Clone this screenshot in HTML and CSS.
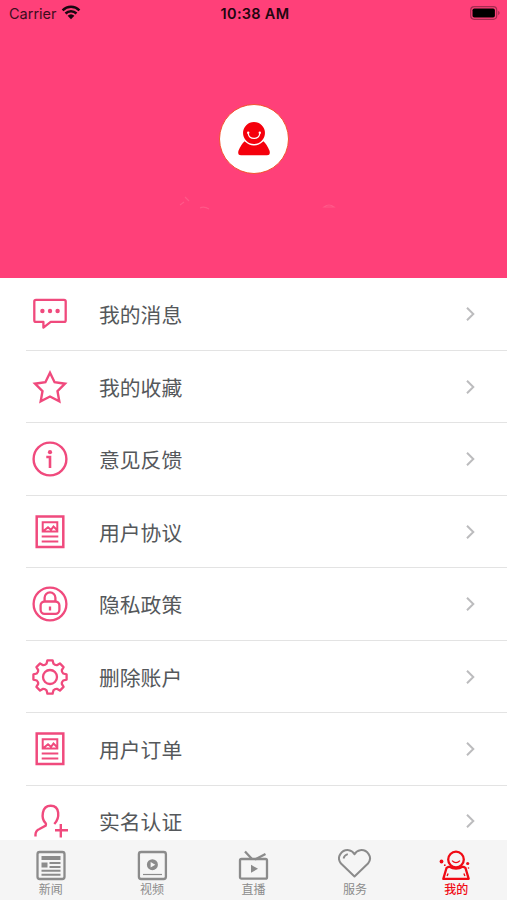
FILE: index.html
```html
<!DOCTYPE html>
<html lang="zh-CN">
<head>
  <meta charset="UTF-8">
  <meta name="viewport" content="width=device-width, initial-scale=1.0">
  <title>我的</title>
  <link rel="stylesheet" href="styles.css">
</head>
<body>
  <svg class="defs" width="0" height="0">
    <symbol id="doc" viewBox="-18 -18 36 36">
      <path d="M-13.300-15.500h26.600v30.500h-26.600z" fill="none" stroke="currentColor" stroke-width="2.500"/>
      <path d="M-7.300-9.800H7.300V-.5H-7.300zM-6-1.500l4-3.300 3 2.600 2.500-3.200L7-2" fill="none" stroke="currentColor" stroke-width="2"/>
      <path d="M-8.300 4.600H8.300M-8.300 9.600H8.300" stroke="currentColor" stroke-width="2"/>
    </symbol>
    <symbol id="chevron" viewBox="0 0 10 16">
      <path d="M2 1.800L8.300 8 2 14.200" fill="none" stroke="currentColor" stroke-width="2"/>
    </symbol>
  </svg>

  <div class="app">
    <header class="profile">
      <div class="status-bar">
        <div class="carrier">
          <span>Carrier</span>
          <svg width="20" height="15" viewBox="0 0 20 15">
            <path d="M1.600 5.300a12 12 0 0 1 16.800 0M4.500 8.500a8 8 0 0 1 11 0" fill="none" stroke="#180710" stroke-width="2.500"/>
            <path d="M6.600 10.800a5 5 0 0 1 6.800 0L10 14.200z" fill="#180710"/>
          </svg>
        </div>
        <span class="time">10:38 AM</span>
        <svg class="battery" width="31" height="14" viewBox="0 0 31 14">
          <rect x=".7" y=".7" width="26" height="12.600" rx="3.500" fill="none" stroke="#a52b50" stroke-width="1.200"/>
          <rect x="2.500" y="2.500" width="22.400" height="9" rx="1.800" fill="#000"/>
          <path d="M28.200 4.800q3 2.200 0 4.400z" fill="#a52b50"/>
        </svg>
      </div>
      <div class="avatar">
        <svg width="34" height="36" viewBox="0 0 34 36">
          <path d="M7.600 20.200h18.800q3.500 3 6.100 9.600 1.200 4.400-2.500 4.400H4q-3.700 0-2.500-4.400 2.600-6.600 6.100-9.600z" fill="#f5000c"/>
          <circle cx="17" cy="12" r="11.700" fill="#f5000c" stroke="#fff" stroke-width="1.500"/>
          <path d="M11.200 12.600a5.900 5.900 0 0 0 11.600 0" fill="none" stroke="#fff" stroke-width="1.200"/>
          <circle cx="11.200" cy="11.800" r="1.200" fill="#fff"/>
          <circle cx="22.800" cy="11.800" r="1.200" fill="#fff"/>
        </svg>
      </div>
      <svg class="smudge" width="150" height="18" viewBox="0 0 150 18">
        <path d="M6 3l4 4M1 11l4-3M21 14q4-2 9 1M145 13q5-4 10 0z" fill="none" stroke="#ff7098" stroke-width="1.200" opacity=".5"/>
      </svg>
    </header>

    <main class="menu">
      <a class="menu-item">
        <svg class="menu-icon" viewBox="-18 -18 36 36">
          <path d="M-14-14.200h28q1.700 0 1.700 1.700V6.200q0 1.700-1.700 1.700H.7l-7.300 5.700V7.900H-14q-1.700 0-1.700-1.700v-18.700q0-1.700 1.700-1.700z" fill="none" stroke="currentColor" stroke-width="2.300" stroke-linejoin="round"/>
          <g fill="currentColor"><circle cx="-7.600" cy="-3" r="2.200"/><circle cx="0" cy="-3" r="2.200"/><circle cx="7.600" cy="-3" r="2.200"/></g>
        </svg>
        <span class="menu-text">我的消息</span>
        <svg class="arrow"><use href="#chevron"/></svg>
      </a>
      <a class="menu-item">
        <svg class="menu-icon" viewBox="-18 -18 36 36">
          <path d="M0-14.300l4.600 9.500L15-3.300 7.500 4.100 9.300 14.300 0 9.500-9.300 14.300-7.500 4.100-15-3.300-4.600-4.800z" fill="none" stroke="currentColor" stroke-width="2.400"/>
        </svg>
        <span class="menu-text">我的收藏</span>
        <svg class="arrow"><use href="#chevron"/></svg>
      </a>
      <a class="menu-item">
        <svg class="menu-icon" viewBox="-18 -18 36 36">
          <circle r="16.400" fill="none" stroke="currentColor" stroke-width="2.400"/>
          <circle cy="-6.800" r="2.100" fill="currentColor"/>
          <path d="M-3.700-2H0V9" fill="none" stroke="currentColor" stroke-width="2.600"/>
        </svg>
        <span class="menu-text">意见反馈</span>
        <svg class="arrow"><use href="#chevron"/></svg>
      </a>
      <a class="menu-item">
        <svg class="menu-icon"><use href="#doc"/></svg>
        <span class="menu-text">用户协议</span>
        <svg class="arrow"><use href="#chevron"/></svg>
      </a>
      <a class="menu-item">
        <svg class="menu-icon" viewBox="-18 -18 36 36">
          <g fill="none" stroke="currentColor" stroke-width="2.300">
            <circle r="16.400"/>
            <rect x="-9.400" y="-2.500" width="18.800" height="12.300" rx="4"/>
            <path d="M-5.400-2.500v-3.700a5.400 5.400 0 0 1 10.800 0v3.700"/>
            <path d="M0 2.500v4"/>
          </g>
        </svg>
        <span class="menu-text">隐私政策</span>
        <svg class="arrow"><use href="#chevron"/></svg>
      </a>
      <a class="menu-item">
        <svg class="menu-icon" viewBox="-18 -18 36 36">
          <g fill="none" stroke="currentColor" stroke-width="2.300" stroke-linejoin="round">
            <path d="M-3.500-13.200L-2.600-16.600 2.600-16.600 3.500-13.200Q5-11.600 6.860-11.810L9.900-13.580 13.580-9.900 11.810-6.860Q11.600-5 13.200-3.500L16.600-2.600 16.600 2.600 13.200 3.500Q11.600 5 11.810 6.860L13.580 9.900 9.900 13.580 6.860 11.810Q5 11.600 3.500 13.200L2.600 16.600-2.600 16.600-3.500 13.200Q-5 11.600-6.860 11.810L-9.900 13.580-13.580 9.900-11.810 6.860Q-11.600 5-13.200 3.500L-16.600 2.600-16.600-2.600-13.200-3.500Q-11.600-5-11.810-6.860L-13.580-9.900-9.900-13.580-6.860-11.810Q-5-11.600-3.500-13.200z"/>
            <circle r="7"/>
          </g>
        </svg>
        <span class="menu-text">删除账户</span>
        <svg class="arrow"><use href="#chevron"/></svg>
      </a>
      <a class="menu-item">
        <svg class="menu-icon"><use href="#doc"/></svg>
        <span class="menu-text">用户订单</span>
        <svg class="arrow"><use href="#chevron"/></svg>
      </a>
      <a class="menu-item">
        <svg class="menu-icon" viewBox="-18 -18 36 36">
          <path d="M-14.500 15.500V13.500Q-14.300 9.500-10.500 8L-4.200 4.500Q-3.500 3.500-4.500 2C-9-2.500-8.700-15.300 .7-15.300S10-3 4.300 3M5 9.300H18M10.800 3v13.500" fill="none" stroke="currentColor" stroke-width="2.400"/>
        </svg>
        <span class="menu-text">实名认证</span>
        <svg class="arrow"><use href="#chevron"/></svg>
      </a>
    </main>

    <nav class="tab-bar">
      <a class="tab">
        <svg width="34" height="34" viewBox="0 0 34 34">
          <rect x="3.500" y="4" width="27" height="27" rx="2.200" fill="none" stroke="currentColor" stroke-width="2.300"/>
          <path d="M7.500 8h19v4h-19zM7.500 14.500h6v5h-6z" fill="currentColor"/>
          <path d="M15.500 15h11M15.500 19h11M7.500 22.800h19M7.500 26.800h19" stroke="currentColor" stroke-width="1.900"/>
        </svg>
        <span>新闻</span>
      </a>
      <a class="tab">
        <svg width="34" height="34" viewBox="0 0 34 34">
          <rect x="3.900" y="4" width="27" height="27" rx="2.200" fill="none" stroke="currentColor" stroke-width="2.300"/>
          <circle cx="17.400" cy="16.700" r="5.500" fill="currentColor"/>
          <path d="M15.600 13.900l4.700 2.800-4.700 2.800z" fill="#f5f5f5"/>
          <path d="M8 26.500h19" stroke="currentColor" stroke-width="1.200"/>
        </svg>
        <span>视频</span>
      </a>
      <a class="tab">
        <svg width="34" height="34" viewBox="0 0 34 34">
          <rect x="3" y="11" width="27" height="19.700" rx="1.500" fill="none" stroke="currentColor" stroke-width="2.300"/>
          <path d="M8 3.500l7 7.500M28.500 6L18 11.500" stroke="currentColor" stroke-width="2.300"/>
          <path d="M14 16.800l7 4-7 4z" fill="currentColor"/>
        </svg>
        <span>直播</span>
      </a>
      <a class="tab">
        <svg width="34" height="34" viewBox="0 0 34 34">
          <path d="M16.500 28.500L3 15.500C-2.300 9 4 1.300 10.800 2.200Q14.500 2.700 16.500 6.300 18.500 2.700 22.200 2.200C29 1.300 35.300 9 30 15.500z" fill="none" stroke="currentColor" stroke-width="2" stroke-linejoin="round"/>
          <path d="M5.500 10.500q1-3.500 4.300-4.300" fill="none" stroke="currentColor" stroke-width="1.800"/>
        </svg>
        <span>服务</span>
      </a>
      <a class="tab active">
        <svg width="34" height="34" viewBox="0 0 34 34">
          <g fill="none" stroke="currentColor" stroke-width="2.300" stroke-linejoin="round">
            <circle cx="17" cy="11.500" r="7.800"/>
            <path d="M10 18.500L7.500 20 4.300 30.800h25.400L26.500 20l-2.500-1.500M10 18.500q7 4.200 14 0"/>
            <path d="M13 12.700q4 4 8 0" stroke-width="1.200"/>
            <path d="M9.100 25.500l-1 2.500M24.900 25.500l1 2.500" stroke-width="1.400"/>
          </g>
          <g fill="currentColor"><circle cx="2.500" cy="13.500" r="1.900"/><circle cx="5.800" cy="17.200" r=".9"/><circle cx="28.700" cy="15.500" r="1.600"/><circle cx="29.500" cy="20" r=".8"/></g>
        </svg>
        <span>我的</span>
      </a>
    </nav>
  </div>
</body>
</html>
```

FILE: styles.css
```css
* { margin: 0; padding: 0; box-sizing: border-box; }
html, body {
  height: 100%;
  background: #fff;
  font-family: Inter, 'Noto Sans CJK SC', sans-serif;
  overflow: hidden;
}
.defs {
  position: absolute;
}
.app {
  height: 100vh;
  display: flex;
  flex-direction: column;
}
.profile {
  height: 278px;
  flex-shrink: 0;
  background: #ff4079;
  display: flex;
  flex-direction: column;
  align-items: center;
}
.status-bar {
  width: 100%;
  height: 27px;
  padding: 0 6px 0 9px;
  display: grid;
  grid-template-columns: 1fr auto 1fr;
  align-items: center;
  font-size: 14.5px;
  color: #3c0d1d;
}
.carrier {
  display: flex;
  align-items: center;
  gap: 4px;
}
.carrier svg {
  margin-top: -2px;
}
.time {
  color: #22060f;
  font-weight: 600;
  letter-spacing: 0.3px;
}
.battery {
  justify-self: end;
  margin-top: -1px;
}
.avatar {
  width: 70px;
  height: 70px;
  margin-top: 77px;
  border: 1px solid #f4542f;
  border-radius: 50%;
  background: #fff;
  display: flex;
  align-items: center;
  justify-content: center;
}
.smudge {
  margin-top: 20px;
  overflow: visible;
}
.menu {
  flex: 1;
  min-height: 0;
  padding-top: 0.6px;
  overflow: hidden;
}
.menu-item {
  height: 72.45px;
  margin-left: 26px;
  padding: 0 32px 0 6px;
  border-bottom: 1px solid #e3e3e3;
  display: flex;
  align-items: center;
  color: #f04a7d;
}
.menu-icon {
  width: 36px;
  height: 36px;
  overflow: visible;
}
.menu-text {
  flex: 1;
  margin-left: 31px;
  font-family: 'Noto Sans CJK SC', sans-serif;
  font-size: 20.8px;
  line-height: 30px;
  color: #55585b;
}
.arrow {
  width: 10px;
  height: 16px;
  color: #bcbcbe;
}
.tab-bar {
  height: 60px;
  flex-shrink: 0;
  background: #f5f5f5;
  display: flex;
}
.tab {
  flex: 1;
  padding-top: 8px;
  display: flex;
  flex-direction: column;
  align-items: center;
  font-family: 'Noto Sans CJK SC', sans-serif;
  font-size: 12px;
  line-height: 14px;
  color: #8b8b8b;
}
.tab.active {
  color: #f00a14;
}
.tab.active span {
  font-weight: 500;
}
```
